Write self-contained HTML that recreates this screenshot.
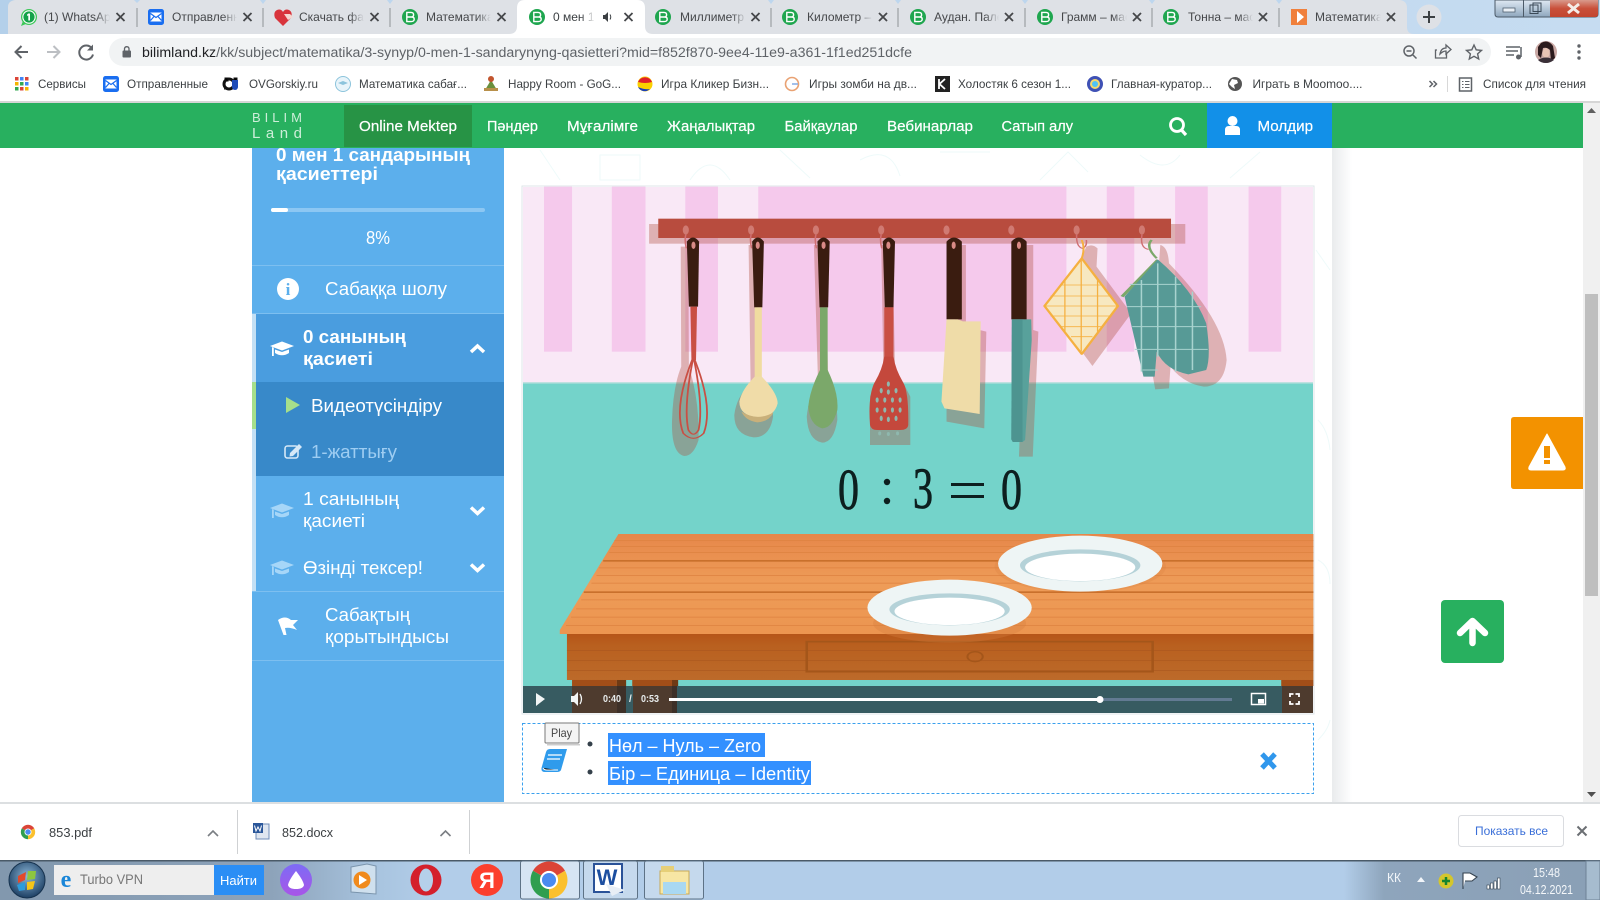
<!DOCTYPE html>
<html lang="kk"><head><meta charset="utf-8"><title>0 мен 1 сандарының қасиеттері</title>
<style>
html,body{margin:0;padding:0;background:#fff;width:1600px;height:900px;overflow:hidden}
svg{display:block}
text{font-family:"Liberation Sans","DejaVu Sans",sans-serif}
.t{font-size:12px;fill:#45474a}
.b{font-size:12px;fill:#3c4043}
.n{font-size:15px;fill:#fff;stroke:#fff;stroke-width:.2}
.s{font-size:18px;fill:#fff}
.sb{font-size:18px;fill:#fff;font-weight:700}
.x{stroke:#45474a;stroke-width:1.8;fill:none}
.sep{stroke:#8f9296;stroke-width:1}
.eq{font-family:"Liberation Serif",serif;font-size:58px;fill:#0d1f1f;stroke:#0d1f1f;stroke-width:.8}
</style></head><body>
<svg width="1600" height="900" viewBox="0 0 1600 900" xmlns="http://www.w3.org/2000/svg">
<defs>
<linearGradient id="fade"><stop offset="0" stop-color="#dee1e6" stop-opacity="0"/><stop offset="1" stop-color="#dee1e6"/></linearGradient>
<linearGradient id="fadew"><stop offset="0" stop-color="#fff" stop-opacity="0"/><stop offset="1" stop-color="#fff"/></linearGradient>
<linearGradient id="frame" x1="0" x2="1"><stop offset="0" stop-color="#b4d0ea"/><stop offset="1" stop-color="#c6dcf1"/></linearGradient>
<linearGradient id="task" x1="0" x2="1"><stop offset="0" stop-color="#8298ae"/><stop offset=".17" stop-color="#8da3ba"/><stop offset=".235" stop-color="#a8c4df"/><stop offset=".27" stop-color="#b2cde9"/><stop offset=".84" stop-color="#b2cde9"/><stop offset=".865" stop-color="#8ea5bc"/><stop offset="1" stop-color="#8a9fb5"/></linearGradient>
<linearGradient id="shade" x1="0" x2="1"><stop offset="0" stop-color="#e9ebed"/><stop offset="1" stop-color="#fff"/></linearGradient>
<linearGradient id="wood" x1="0" y1="0" x2="0" y2="1"><stop offset="0" stop-color="#e6874a"/><stop offset=".5" stop-color="#ee9c58"/><stop offset="1" stop-color="#ec9550"/></linearGradient>
<linearGradient id="front" x1="0" y1="0" x2="0" y2="1"><stop offset="0" stop-color="#b55418"/><stop offset=".25" stop-color="#b9601f"/><stop offset="1" stop-color="#bc6a2a"/></linearGradient>
<linearGradient id="closeb" x1="0" y1="0" x2="0" y2="1"><stop offset="0" stop-color="#d99a8c"/><stop offset=".5" stop-color="#c9503a"/><stop offset="1" stop-color="#c2452f"/></linearGradient>
<linearGradient id="winb" x1="0" y1="0" x2="0" y2="1"><stop offset="0" stop-color="#dfe9f3"/><stop offset="1" stop-color="#8ea6bd"/></linearGradient>
<radialGradient id="orb" cx=".5" cy=".4" r=".6"><stop offset="0" stop-color="#8bb7d8"/><stop offset="1" stop-color="#1d3f63"/></radialGradient>
<linearGradient id="alice" x1="0" y1="0" x2="0" y2="1"><stop offset="0" stop-color="#7d6cf5"/><stop offset="1" stop-color="#a855e8"/></linearGradient>
<g id="fav"><circle r="8" fill="#1fa64f"/><path d="M-3.200-4.600H1Q3.600-4.600 3.600-2.300 3.600-.3 1.800 0 4.200.1 4.200 2.200 4.200 4.600 1 4.600H-3.200ZM-3.200 0H1.800" fill="none" stroke="#fff" stroke-width="1.400"/></g>
<g id="tx"><path class="x" d="M-4-4L4 4M4-4L-4 4"/></g>
<g id="mail"><rect x="-8" y="-8" width="16" height="16" rx="2.500" fill="#1a6ef0"/><rect x="-5.500" y="-4.500" width="11" height="9" fill="#fff"/><path d="M-5.500-3.500L0 .5 5.500-3.500M-5.500 3.500L-2-.5M5.500 3.500L2-.5" stroke="#1a6ef0" stroke-width="1.200" fill="none"/></g>
<g id="chrome"><path d="M0 0L-8.660-5A10 10 0 0 1 8.660-5Z" fill="#db4437"/><path d="M0 0L8.660-5A10 10 0 0 1 0 10Z" fill="#fbc02d"/><path d="M0 0L0 10A10 10 0 0 1-8.660-5Z" fill="#2f9e4f"/><circle r="4.900" fill="#fff"/><circle r="3.800" fill="#4a8bf0"/></g>
<g id="cap"><path d="M0-6.500L12-2 0 2.500-12-2Z"/><path d="M-7 1.500V5Q0 9.500 7 5V1.500L0 4Z"/><path d="M-10-1V8h1.800V-.3Z"/></g>
</defs>

<!-- window frame + tab strip -->
<rect width="1600" height="34" fill="url(#frame)"/>
<path d="M8 34V7Q8 1 15 0H1400Q1407 1 1407 8V27Q1407 34 1414 34Z" fill="#dee1e6"/>
<path d="M134 0L137 3 140 0ZM260 0L263 4 266 0ZM387 0L390 4 393 0ZM768 0L771 4 774 0ZM895 0L898 4 901 0ZM1022 0L1025 4 1028 0ZM1149 0L1152 4 1155 0ZM1276 0L1279 4 1282 0Z" fill="#bdd6ee"/>
<text class="t" x="44" y="21">(1) WhatsApp</text>
<text class="t" x="172" y="21">Отправленные</text>
<text class="t" x="299" y="21">Скачать файл</text>
<text class="t" x="426" y="21">Математика</text>
<text class="t" x="680" y="21">Миллиметр</text>
<text class="t" x="807" y="21">Километр – м</text>
<text class="t" x="934" y="21">Аудан. Палет</text>
<text class="t" x="1061" y="21">Грамм – масс</text>
<text class="t" x="1188" y="21">Тонна – масс</text>
<text class="t" x="1315" y="21">Математика</text>
<g fill="url(#fade)"><rect x="96" y="6" width="14" height="22"/><rect x="223" y="6" width="14" height="22"/><rect x="350" y="6" width="14" height="22"/><rect x="477" y="6" width="14" height="22"/><rect x="732" y="6" width="14" height="22"/><rect x="859" y="6" width="14" height="22"/><rect x="985" y="6" width="14" height="22"/><rect x="1113" y="6" width="14" height="22"/><rect x="1239" y="6" width="14" height="22"/><rect x="1367" y="6" width="14" height="22"/></g>
<g fill="#dee1e6"><rect x="110" y="6" width="26" height="22"/><rect x="237" y="6" width="25" height="22"/><rect x="364" y="6" width="25" height="22"/><rect x="491" y="6" width="25" height="22"/><rect x="746" y="6" width="24" height="22"/><rect x="873" y="6" width="24" height="22"/><rect x="999" y="6" width="25" height="22"/><rect x="1127" y="6" width="24" height="22"/><rect x="1253" y="6" width="25" height="22"/><rect x="1381" y="6" width="24" height="22"/></g>
<path class="sep" d="M137 8V27M263 8V27M390 8V27M771 8V27M898 8V27M1025 8V27M1152 8V27M1279 8V27"/>
<use href="#tx" x="120.500" y="17"/><use href="#tx" x="247.500" y="17"/><use href="#tx" x="374.500" y="17"/><use href="#tx" x="501.500" y="17"/><use href="#tx" x="755.500" y="17"/><use href="#tx" x="883" y="17"/><use href="#tx" x="1009" y="17"/><use href="#tx" x="1137" y="17"/><use href="#tx" x="1263" y="17"/><use href="#tx" x="1391" y="17"/>
<!-- favicons -->
<path d="M23 21L21 26 26 24Z" fill="#3dc85a"/><circle cx="29" cy="17" r="8" fill="#3dc85a"/><circle cx="29" cy="17" r="6.700" fill="#fff"/><circle cx="29" cy="17" r="5.600" fill="#14a24a"/><path d="M28.300 13.500h1.700V20.500H28.300V15.400L27.100 16V14.500Z" fill="#fff"/>
<use href="#mail" x="156" y="17"/>
<path d="M283 26L275 18Q273 12 277 10 281 8.500 283 12 285 8.500 289 10 293 12 291 18Z" fill="#d8343c"/><path d="M284 14h6l3 3-5 3Z" fill="#f5d7d0"/>
<use href="#fav" x="410" y="17"/><use href="#fav" x="663" y="17"/><use href="#fav" x="790" y="17"/><use href="#fav" x="918" y="17"/><use href="#fav" x="1045" y="17"/><use href="#fav" x="1171" y="17"/>
<rect x="1291" y="9" width="16" height="16" fill="#f0803c"/><path d="M1297 11L1304 17 1297 23Z" fill="#fff"/>
<!-- active tab -->
<path d="M509 34Q517 34 517 26V8Q517 0 525 0H637Q645 0 645 8V26Q645 34 653 34Z" fill="#fff"/>
<use href="#fav" x="537" y="17"/>
<text class="t" x="553" y="21" style="fill:#3c4043">0 мен 1 сан</text>
<rect x="581" y="6" width="14" height="22" fill="url(#fadew)"/><rect x="595" y="6" width="40" height="22" fill="#fff"/>
<path d="M603 15h2l3-3v10l-3-3h-2Z" fill="#3c4043"/><path d="M610 14.500q1.500 2.500 0 5" stroke="#3c4043" fill="none"/>
<use href="#tx" x="628.500" y="17"/>
<!-- new tab -->
<circle cx="1429" cy="17" r="12.500" fill="#dee1e6"/><path d="M1429 11V23M1423 17H1435" stroke="#3c4043" stroke-width="2"/>
<!-- window controls -->
<path d="M1495 0H1598V14Q1598 17 1595 17H1498Q1495 17 1495 14Z" fill="url(#winb)" stroke="#4c5a68"/>
<rect x="1523" y="0" width="1" height="17" fill="#4c5a68"/><path d="M1550 0H1598V14Q1598 17 1595 17H1550Z" fill="url(#closeb)"/>
<rect x="1503" y="8" width="12" height="4" fill="#e9eff5" stroke="#4f5f70" stroke-width=".8"/>
<rect x="1530" y="5" width="8" height="8.500" fill="none" stroke="#3b4a58"/><rect x="1533" y="3" width="8" height="8.500" fill="none" stroke="#3b4a58"/>
<path d="M1568 4L1579 13M1579 4L1568 13" stroke="#f4ece8" stroke-width="3"/>

<!-- toolbar -->
<rect y="34" width="1600" height="34" fill="#fff"/>
<path d="M28 52H16M21.500 46L15.500 52 21.500 58" stroke="#5f6368" stroke-width="2" fill="none"/>
<path d="M47 52H59M53.500 46L59.500 52 53.500 58" stroke="#bcbfc3" stroke-width="2" fill="none"/>
<path d="M92 48.500A7 7 0 1 0 93 54.500" stroke="#5f6368" stroke-width="2" fill="none"/><path d="M93 44.500V50.500H87Z" fill="#5f6368"/>
<rect x="109" y="38" width="1382" height="28" rx="14" fill="#f1f3f4"/>
<rect x="122.500" y="50.500" width="8.500" height="7" rx="1" fill="#5f6368"/><path d="M124.500 50.500V48.500a2.300 2.300 0 0 1 4.500 0V50.500" stroke="#5f6368" stroke-width="1.300" fill="none"/>
<text x="142" y="57" font-size="13.500" fill="#5f6368" textLength="770" lengthAdjust="spacingAndGlyphs"><tspan fill="#202124">bilimland.kz</tspan>/kk/subject/matematika/3-synyp/0-men-1-sandarynyng-qasietteri?mid=f852f870-9ee4-11e9-a361-1f1ed251dcfe</text>
<circle cx="1409" cy="51" r="5" fill="none" stroke="#5f6368" stroke-width="1.500"/><path d="M1406.500 51h5M1413 55l3.500 3.500" stroke="#5f6368" stroke-width="1.500"/>
<path d="M1437 50h-1.500v8h11v-4M1440 54q1-6 6-6V45l5 4.500-5 4.500v-3q-3 0-6 3Z" stroke="#5f6368" stroke-width="1.300" fill="none"/>
<path d="M1474 45l2.200 4.800 5.300.6-3.900 3.500 1.100 5.100-4.700-2.700-4.700 2.700 1.100-5.100-3.900-3.500 5.300-.6Z" stroke="#5f6368" stroke-width="1.400" fill="none"/>
<path d="M1506 47H1520M1506 51H1518M1506 55H1514M1521 47V57" stroke="#5f6368" stroke-width="1.500"/><circle cx="1518.500" cy="57" r="2.500" fill="#5f6368"/>
<circle cx="1546" cy="52" r="11" fill="#c9a8a4"/><path d="M1541 43Q1548 39 1553 46L1555 58 1551 61 1550 50Q1547 47 1543 48L1541 58 1538 55 1538 47Z" fill="#2b1a1c"/><ellipse cx="1546" cy="53" rx="3.500" ry="5" fill="#e8c4b4"/><path d="M1538 60Q1546 55 1554 60 1550 63 1546 63 1541 63 1538 60Z" fill="#3a3038"/>
<circle cx="1579" cy="46" r="1.700" fill="#5f6368"/><circle cx="1579" cy="52" r="1.700" fill="#5f6368"/><circle cx="1579" cy="58" r="1.700" fill="#5f6368"/>

<!-- bookmarks -->
<rect y="68" width="1600" height="35" fill="#fff"/><rect y="101" width="1600" height="2" fill="#d6d6d6"/>
<rect x="15" y="77" width="3.500" height="3.500" fill="#db4437"/><rect x="20" y="77" width="3.500" height="3.500" fill="#4285f4"/><rect x="25" y="77" width="3.500" height="3.500" fill="#db4437"/><rect x="15" y="82" width="3.500" height="3.500" fill="#f4b400"/><rect x="20" y="82" width="3.500" height="3.500" fill="#34a853"/><rect x="25" y="82" width="3.500" height="3.500" fill="#4285f4"/><rect x="15" y="87" width="3.500" height="3.500" fill="#34a853"/><rect x="20" y="87" width="3.500" height="3.500" fill="#db4437"/><rect x="25" y="87" width="3.500" height="3.500" fill="#f4b400"/>
<text class="b" x="38" y="88" textLength="48" lengthAdjust="spacingAndGlyphs">Сервисы</text>
<use href="#mail" x="111" y="84"/>
<text class="b" x="127" y="88" textLength="81" lengthAdjust="spacingAndGlyphs">Отправленные</text>
<circle cx="229" cy="84" r="5" fill="none" stroke="#111" stroke-width="3"/><path d="M225 78h3v3h-3ZM234 78h3v3h-3ZM224 89h4M233 89h4" stroke="#111"/><path d="M232 80h6v7a3 3 0 0 1-6 0Z" fill="#1e4bb8"/>
<text class="b" x="249" y="88" textLength="69" lengthAdjust="spacingAndGlyphs">OVGorskiy.ru</text>
<circle cx="343" cy="84" r="7.500" fill="#e8f4fa" stroke="#8cc4dc"/><path d="M338 83l5-2 5 2-5 2Z" fill="#8cc4dc"/>
<text class="b" x="359" y="88" textLength="108" lengthAdjust="spacingAndGlyphs">Математика сабағ...</text>
<path d="M485 90l6-10 6 10Z" fill="#6a8f3c"/><circle cx="491" cy="79" r="3" fill="#c2552e"/><rect x="484" y="88" width="14" height="3" fill="#b8904a"/>
<text class="b" x="508" y="88" textLength="113" lengthAdjust="spacingAndGlyphs">Happy Room - GoG...</text>
<circle cx="645" cy="84" r="7.500" fill="#fbd000"/><path d="M638 82A7.500 7.500 0 0 1 652 82Q645 84 638 82Z" fill="#e0202a"/><path d="M638 87A7.500 7.500 0 0 0 650 89Q645 90 638 87Z" fill="#1a3fb8"/>
<text class="b" x="661" y="88" textLength="108" lengthAdjust="spacingAndGlyphs">Игра Кликер Бизн...</text>
<circle cx="792" cy="84" r="6.500" fill="none" stroke="#e9a273" stroke-width="1.600"/><path d="M792 84h6" stroke="#8ab0e6" stroke-width="1.600"/>
<text class="b" x="809" y="88" textLength="108" lengthAdjust="spacingAndGlyphs">Игры зомби на дв...</text>
<rect x="935" y="76" width="15" height="16" fill="#222"/><path d="M939 79V89M945 79L939.500 84 945 89" stroke="#fff" stroke-width="1.800" fill="none"/>
<text class="b" x="958" y="88" textLength="113" lengthAdjust="spacingAndGlyphs">Холостяк 6 сезон 1...</text>
<circle cx="1095" cy="84" r="8" fill="#3f51b5"/><circle cx="1095" cy="84" r="5" fill="#f5d76e"/><circle cx="1095" cy="84" r="3" fill="#4fc3f7"/>
<text class="b" x="1111" y="88" textLength="101" lengthAdjust="spacingAndGlyphs">Главная-куратор...</text>
<circle cx="1235" cy="84" r="7" fill="#555"/><path d="M1232 79l5 1 1 3-4 2 1 4-3-2-3-3Z" fill="#fff"/>
<text class="b" x="1252.500" y="88" textLength="110" lengthAdjust="spacingAndGlyphs">Играть в Moomoo....</text>
<path d="M1429.500 81l3 3-3 3M1433.500 81l3 3-3 3" stroke="#5f6368" stroke-width="1.500" fill="none"/>
<rect x="1447" y="76" width="1" height="16" fill="#d8d8d8"/>
<rect x="1459.500" y="78" width="12" height="13" fill="none" stroke="#5f6368" stroke-width="1.500"/><path d="M1462 81.500h1.500M1462 84.500h1.500M1462 87.500h1.500M1465 81.500h4.500M1465 84.500h4.500M1465 87.500h4.500" stroke="#5f6368"/>
<text class="b" x="1483" y="88" textLength="103" lengthAdjust="spacingAndGlyphs">Список для чтения</text>

<!-- page -->
<rect y="103" width="1600" height="700" fill="#fff"/>
<rect x="1332" y="148" width="20" height="655" fill="url(#shade)"/>
<!-- faint background doodles -->
<g fill="none" stroke="#eefafa" stroke-width="1">
 <path d="M540 150L560 180M600 155h40v25h-40ZM690 180q20-30 40 0M780 150l30 28M860 160q30-16 40 16M940 152h50M1040 180l28-28 20 20M1140 155q25 20 40 0M1230 178l30-26M1316 250l14 20M1318 420q10 10 12 30M1318 560q12 6 12 24M1318 740q10-10 12-20"/>
 <path d="M640 790q30-40 60-10M740 792l30-40 40 30M860 780q10-30 40-25M960 790q30-20 30-50M1080 790q-10-30 20-40M1180 785l40-40M1300 790q-10-30 10-40"/>
</g>
<!-- sidebar -->
<rect x="252" y="148" width="252" height="655" fill="#5cafec"/>
<text class="sb" x="276" y="161" textLength="194" lengthAdjust="spacingAndGlyphs">0 мен 1 сандарының</text>
<text class="sb" x="276" y="180" textLength="102" lengthAdjust="spacingAndGlyphs">қасиеттері</text>
<rect x="271" y="208" width="214" height="4" rx="2" fill="#8cc7f3"/><rect x="271" y="208" width="17" height="4" rx="2" fill="#fff"/>
<text class="s" x="366" y="244" textLength="24" lengthAdjust="spacingAndGlyphs" font-size="17">8%</text>
<rect x="252" y="265" width="252" height="1" fill="#7dbff0"/>
<circle cx="288" cy="289" r="11" fill="#fff"/><text x="288" y="295" text-anchor="middle" font-size="17" font-weight="700" fill="#5cafec" style="font-family:'Liberation Serif',serif">i</text>
<text class="s" x="325" y="295" textLength="122" lengthAdjust="spacingAndGlyphs">Сабаққа шолу</text>
<rect x="252" y="313" width="252" height="1" fill="#7dbff0"/>
<rect x="252" y="314" width="252" height="68" fill="#4a9ddf"/>
<rect x="252" y="314" width="4" height="277" fill="#c3e0f5"/>
<rect x="256" y="382" width="248" height="94" fill="#3889c9"/>
<rect x="252" y="382" width="4" height="47" fill="#a6df8b"/>
<use href="#cap" x="282" y="348" fill="#fff"/>
<text class="sb" x="303" y="343" textLength="103" lengthAdjust="spacingAndGlyphs">0 санының</text>
<text class="sb" x="303" y="365" textLength="70" lengthAdjust="spacingAndGlyphs">қасиеті</text>
<path d="M471 352L477.500 346 484 352" stroke="#fff" stroke-width="3.500" fill="none"/>
<polygon points="286,397 300,405 286,413" fill="#a6df8b"/>
<text class="s" x="311" y="412" textLength="131" lengthAdjust="spacingAndGlyphs">Видеотүсіндіру</text>
<rect x="285" y="446" width="13" height="12" rx="2.500" fill="none" stroke="#d5e8f7" stroke-width="1.600"/><path d="M290 453L299 444 302 447 293 456 289.500 456.500Z" fill="#d5e8f7"/>
<text class="s" x="311" y="458" textLength="86" lengthAdjust="spacingAndGlyphs" style="fill:#9ecdf2">1-жаттығу</text>
<use href="#cap" x="282" y="510" fill="#a6d6f8"/>
<text class="s" x="303" y="505" textLength="96" lengthAdjust="spacingAndGlyphs">1 санының</text>
<text class="s" x="303" y="527" textLength="62" lengthAdjust="spacingAndGlyphs">қасиеті</text>
<path d="M471 507.500L477.500 513.500 484 507.500" stroke="#fff" stroke-width="3.500" fill="none"/>
<use href="#cap" x="282" y="567" fill="#a6d6f8"/>
<text class="s" x="303" y="574" textLength="120" lengthAdjust="spacingAndGlyphs">Өзінді тексер!</text>
<path d="M471 564.500L477.500 570.500 484 564.500" stroke="#fff" stroke-width="3.500" fill="none"/>
<rect x="252" y="591" width="252" height="1" fill="#7dbff0"/>
<path d="M278 620Q285 615 291 620L298 620 293 625 297 630Q290 627 285 628L286.500 635 283.500 635Z" fill="#fff"/>
<text class="s" x="325" y="621" textLength="85" lengthAdjust="spacingAndGlyphs">Сабақтың</text>
<text class="s" x="325" y="643" textLength="124" lengthAdjust="spacingAndGlyphs">қорытындысы</text>
<rect x="252" y="660" width="252" height="1" fill="#7dbff0"/>

<!-- video -->
<rect x="522" y="186" width="792" height="528" fill="none" stroke="#dfe6ea"/>
<rect x="523" y="187" width="790" height="196" fill="#f9e8f6"/>
<rect x="523" y="383" width="790" height="303" fill="#74d3ca"/>
<rect x="523" y="382" width="790" height="1.500" fill="#bfe0e0"/>
<g transform="translate(520,180) scale(.5102,.33333)">
 <g fill="#f5c9ec"><rect x="47" y="20" width="55" height="495"/><rect x="180" y="20" width="66" height="495"/><rect x="324" y="20" width="64" height="495"/><rect x="467" y="20" width="604" height="495"/><rect x="1150" y="20" width="54" height="495"/><rect x="1284" y="20" width="64" height="495"/><rect x="1428" y="20" width="64" height="495"/></g>
 <g fill="#b05040" opacity=".36">
  <rect x="253" y="132" width="1051" height="59"/>
  <path d="M315 200L330 200 331 560Q352 660 350 780 340 828 322 828 296 820 298 720 300 620 316 560Z"/>
  <path d="M448 195H463L467 610Q496 660 496 710 490 772 458 772 420 765 420 705 424 650 452 610Z"/>
  <path d="M576 195H598L604 600Q622 660 622 720 615 788 592 788 564 780 562 710 566 650 584 600Z"/>
  <path d="M708 195H730L735 560 765 650V795H686V650L712 560Z"/>
  <path d="M866 195H874V440L914 455 910 745 836 725V690Z"/>
  <path d="M993 195H1006V450L1016 455 1005 830H978Z"/>
  <path d="M1110 200Q1122 190 1132 205L1130 260 1198 400 1122 558 1050 410Z"/>
  <path d="M1255 195Q1270 200 1272 250 1380 420 1385 540 1380 620 1340 620 1300 610 1275 560L1272 625 1245 628 1230 500 1250 300Z"/>
 </g>
 <rect x="271" y="116" width="1005" height="58" fill="#b84c3e"/>
 <g fill="#d07a72"><ellipse cx="325" cy="150" rx="6" ry="14"/><ellipse cx="453" cy="150" rx="6" ry="14"/><ellipse cx="580" cy="150" rx="6" ry="14"/><ellipse cx="708" cy="150" rx="6" ry="14"/><ellipse cx="836" cy="150" rx="6" ry="14"/><ellipse cx="963" cy="150" rx="6" ry="14"/><ellipse cx="1091" cy="150" rx="6" ry="14"/><ellipse cx="1219" cy="150" rx="6" ry="14"/></g>
 <path d="M325 164Q322 180 326 205M453 164Q450 180 454 205M580 164Q577 180 581 205M708 164Q705 180 709 205M1091 164Q1090 200 1102 205 1112 200 1110 180M1219 164Q1215 205 1232 208" fill="none" stroke="#cf6f72" stroke-width="3"/>
 <g fill="#3a1c10">
  <path d="M327 185Q339 160 351 185L349 380H331Z"/>
  <path d="M455 185Q466 160 478 185L475 382H459Z"/>
  <path d="M583 185Q595 160 607 185L604 382H587Z"/>
  <path d="M711 185Q723 160 735 185L732 382H715Z"/>
  <path d="M836 185Q850 160 866 185V418H836Z"/>
  <path d="M963 185Q978 160 993 185V418H963Z"/>
 </g>
 <g fill="#d88a86"><ellipse cx="340" cy="196" rx="4" ry="11"/><ellipse cx="466" cy="196" rx="4" ry="11"/><ellipse cx="595" cy="196" rx="4" ry="11"/><ellipse cx="722" cy="196" rx="4" ry="11"/><ellipse cx="850" cy="196" rx="4" ry="11"/><ellipse cx="978" cy="196" rx="4" ry="11"/></g>
 <!-- whisk -->
 <path d="M334 380H347L345 540H336Z" fill="#c94f44"/>
 <g fill="none" stroke="#c94f44" stroke-width="3.500"><path d="M340 530Q300 680 320 760 340 790 360 760 380 680 340 530Z"/><path d="M340 530Q320 680 330 750 340 775 350 750 360 680 340 530Z"/></g>
 <!-- spoon -->
 <rect x="460" y="382" width="14" height="220" fill="#f0dca0"/>
 <path d="M460 590H474Q505 640 505 670 498 712 467 712 430 708 430 665 434 630 460 590Z" fill="#f0dca8"/>
 <path d="M434 695Q465 725 497 697 488 725 465 727 442 722 434 695Z" fill="#c9b07a"/>
 <!-- ladle -->
 <rect x="588" y="382" width="15" height="200" fill="#7ba86a"/>
 <path d="M588 570H603Q625 640 622 690 612 745 592 745 568 735 565 680 568 630 588 570Z" fill="#7ba86a"/>
 <!-- slotted spatula -->
 <rect x="714" y="382" width="18" height="170" fill="#c94f44"/>
 <path d="M714 530H732Q736 570 752 610 762 640 761 735 760 750 745 750H700Q688 750 686 735 682 650 694 610 710 570 714 530Z" fill="#c4483c"/>
 <g fill="#8fb8ae"><ellipse cx="722" cy="612" rx="3" ry="8"/><ellipse cx="708" cy="632" rx="3" ry="8"/><ellipse cx="722" cy="636" rx="3" ry="8"/><ellipse cx="737" cy="632" rx="3" ry="8"/><ellipse cx="700" cy="660" rx="3" ry="8"/><ellipse cx="715" cy="660" rx="3" ry="8"/><ellipse cx="730" cy="660" rx="3" ry="8"/><ellipse cx="745" cy="660" rx="3" ry="8"/><ellipse cx="700" cy="690" rx="3" ry="8"/><ellipse cx="715" cy="690" rx="3" ry="8"/><ellipse cx="730" cy="690" rx="3" ry="8"/><ellipse cx="745" cy="690" rx="3" ry="8"/><ellipse cx="708" cy="715" rx="3" ry="8"/><ellipse cx="722" cy="718" rx="3" ry="8"/><ellipse cx="737" cy="715" rx="3" ry="8"/><ellipse cx="705" cy="760" rx="3" ry="6"/><ellipse cx="722" cy="762" rx="3" ry="6"/><ellipse cx="740" cy="760" rx="3" ry="6"/></g>
 <!-- cleaver -->
 <path d="M836 418L858 418 868 424 903 424 901 702 832 685 826 665Z" fill="#efdca8"/>
 <!-- knife -->
 <path d="M964 418H1002L1003 480 990 780 985 786H966L963 778Z" fill="#58a19b"/>
 <path d="M964 418H985L985 786H966L963 778Z" fill="#4d9490"/>
 <!-- pot holder -->
 <path d="M1101 180Q1108 205 1101 235" fill="none" stroke="#f5b040" stroke-width="4"/>
 <path d="M1101 235L1172 378 1101 522 1028 378Z" fill="#f7e8c0" stroke="#f5b040" stroke-width="5" stroke-linejoin="round"/>
 <g stroke="#f5b040" stroke-width="2.500"><path d="M1068 300V455M1100 240V515M1132 300V455M1062 315H1140M1040 348H1160M1030 378H1170M1040 408H1160M1060 440H1142M1080 470H1122"/></g>
 <!-- mitt -->
 <path d="M1180 350L1250 240" stroke="#7ba86a" stroke-width="7"/>
 <path d="M1238 180Q1225 200 1248 235" fill="none" stroke="#7ba86a" stroke-width="5"/>
 <path d="M1250 238Q1320 330 1345 430 1355 530 1345 570L1310 583Q1265 570 1248 515L1244 590H1222Q1205 480 1185 350Z" fill="#579a96"/>
 <g stroke="#a8d3cf" stroke-width="3"><path d="M1218 300V575M1250 250V530M1285 290V575M1318 335V570M1195 313H1295M1190 380H1335M1200 440H1345M1205 508H1348M1220 570H1250"/></g>
</g>
<g transform="translate(520,460) scale(.5102,.33333)">
 <path d="M193 222H1555V522H78V510Z" fill="url(#wood)"/>
 <g fill="#c9702c"><rect x="163" y="300" width="1392" height="5"/><rect x="125" y="394" width="1430" height="5"/></g>
 <g fill="#de8240" opacity=".75"><rect x="185" y="240" width="1370" height="3"/><rect x="180" y="258" width="1375" height="3"/><rect x="175" y="276" width="1380" height="3"/><rect x="155" y="322" width="1400" height="3"/><rect x="150" y="345" width="1405" height="3"/><rect x="140" y="368" width="1415" height="3"/><rect x="120" y="418" width="1435" height="3"/><rect x="110" y="445" width="1445" height="3"/><rect x="100" y="470" width="1455" height="3"/><rect x="90" y="495" width="1465" height="3"/></g>
 <rect x="92" y="522" width="1463" height="138" fill="url(#front)"/>
 <g fill="#a8561e" opacity=".55"><rect x="92" y="570" width="1463" height="3"/><rect x="92" y="600" width="1463" height="3"/><rect x="92" y="630" width="1463" height="3"/></g>
 <rect x="562" y="545" width="678" height="90" fill="none" stroke="#a4561a" stroke-width="5"/>
 <circle cx="892" cy="590" r="15" fill="none" stroke="#a4561a" stroke-width="4"/>
 <g fill="#a24e18"><rect x="102" y="660" width="88" height="18"/><rect x="220" y="660" width="80" height="18"/><rect x="1492" y="660" width="63" height="18"/></g>
 <g fill="#6e3a14"><rect x="190" y="660" width="18" height="18"/><rect x="298" y="660" width="12" height="18"/></g>
 <ellipse cx="842" cy="490" rx="150" ry="58" fill="#d67f3e" opacity=".35"/>
 <ellipse cx="1098" cy="320" rx="168" ry="78" fill="#d67f3e" opacity=".25"/>
 <ellipse cx="1098" cy="311" rx="161" ry="84" fill="#eef5f5"/><ellipse cx="1098" cy="316" rx="118" ry="48" fill="#b5d2d8"/><ellipse cx="1098" cy="322" rx="108" ry="41" fill="#fff"/>
 <ellipse cx="842" cy="443" rx="161" ry="84" fill="#eef5f5"/><ellipse cx="842" cy="448" rx="118" ry="48" fill="#b5d2d8"/><ellipse cx="842" cy="454" rx="108" ry="41" fill="#fff"/>
</g>
<g>
 <text class="eq" x="838" y="509" textLength="21" lengthAdjust="spacingAndGlyphs">0</text>
 <circle cx="887" cy="482" r="3.200" fill="#0d1f1f"/><circle cx="887" cy="501" r="3.200" fill="#0d1f1f"/>
 <text class="eq" x="913" y="508" textLength="20" lengthAdjust="spacingAndGlyphs">3</text>
 <rect x="951" y="483" width="33" height="3" fill="#0d1f1f"/><rect x="951" y="495" width="33" height="3" fill="#0d1f1f"/>
 <text class="eq" x="1001" y="509" textLength="21" lengthAdjust="spacingAndGlyphs">0</text>
</g>
<!-- video controls -->
<rect x="523" y="686" width="790" height="27" fill="#375b61"/>
<g fill="#4e3b2e"><rect x="572" y="686" width="45" height="27"/><rect x="633" y="686" width="39" height="27"/><rect x="1282" y="686" width="31" height="27"/></g>
<g fill="#3d3028"><rect x="617" y="686" width="9" height="27"/><rect x="672" y="686" width="5" height="27"/></g>
<polygon points="536,693 545,699 536,706" fill="#f2f5f5"/>
<path d="M571 696h3l4-4v14l-4-4h-3Z" fill="#f2f5f5"/><path d="M580 694q3 5 0 10" stroke="#f2f5f5" stroke-width="1.300" fill="none"/>
<text x="603" y="702" font-size="10" font-weight="700" fill="#e8ecec" textLength="18" lengthAdjust="spacingAndGlyphs">0:40</text>
<text x="629" y="702" font-size="10" font-weight="700" fill="#e8ecec">/</text>
<text x="641" y="702" font-size="10" font-weight="700" fill="#e8ecec" textLength="18" lengthAdjust="spacingAndGlyphs">0:53</text>
<rect x="669" y="698" width="563" height="3" fill="#627a92"/><rect x="669" y="698" width="431" height="3" fill="#fff"/><circle cx="1100" cy="699.500" r="3.500" fill="#fff"/>
<rect x="1251.500" y="693.500" width="14" height="11" fill="none" stroke="#fff" stroke-width="1.500"/><rect x="1258" y="699" width="6" height="4.500" fill="#fff"/>
<path d="M1290 697V694H1293.500M1295.500 694H1299V697M1299 701V704H1295.500M1293.500 704H1290V701" stroke="#fff" stroke-width="1.800" fill="none"/>

<!-- glossary box -->
<rect x="522.500" y="723.500" width="791" height="70" fill="#fff" stroke="#3aa0ee" stroke-dasharray="3 2"/>
<rect x="608" y="733" width="157" height="24" fill="#3390ff"/><rect x="608" y="761" width="203" height="24" fill="#3390ff"/>
<circle cx="590" cy="744" r="2.500" fill="#34404a"/><circle cx="590" cy="772" r="2.500" fill="#34404a"/>
<text x="609" y="752" font-size="18.500" fill="#fff" textLength="152" lengthAdjust="spacingAndGlyphs">Нөл – Нуль – Zero</text>
<text x="609" y="780" font-size="18.500" fill="#fff" textLength="201" lengthAdjust="spacingAndGlyphs">Бір – Единица – Identity</text>
<path d="M546 752Q547 749 550 749H567L561 770Q560 772 557 772H545Q541 772 541.500 768Z" fill="#2f9bec"/>
<path d="M548 755H562M547 759H560" stroke="#fff" stroke-width="1.300"/><path d="M543 768Q544 770 547 770H558" stroke="#fff"/>
<path d="M1262 754L1275 768M1275 754L1262 768" stroke="#3097ec" stroke-width="5"/>
<rect x="545" y="723" width="34" height="20" rx="1" fill="#f4f4f4" stroke="#7a7a7a"/><rect x="547" y="744" width="33" height="1.500" fill="#ccc"/>
<text x="551" y="737" font-size="12" fill="#444" textLength="21" lengthAdjust="spacingAndGlyphs">Play</text>

<!-- nav -->
<rect y="103" width="1583" height="45" fill="#28b05f"/>
<rect x="344" y="105" width="128" height="42" fill="#279345"/>
<rect x="1207" y="103" width="125" height="45" fill="#1290e8"/>
<text x="252" y="122" font-size="13" fill="#cdeed9" textLength="50" lengthAdjust="spacing">BILIM</text>
<text x="252" y="138" font-size="15" fill="#cdeed9" textLength="50" lengthAdjust="spacing">Land</text>
<text class="n" x="359" y="131" textLength="98" lengthAdjust="spacingAndGlyphs">Online Mektep</text>
<text class="n" x="487" y="131" textLength="51" lengthAdjust="spacingAndGlyphs">Пәндер</text>
<text class="n" x="567" y="131" textLength="71" lengthAdjust="spacingAndGlyphs">Мұғалімге</text>
<text class="n" x="667" y="131" textLength="88" lengthAdjust="spacingAndGlyphs">Жаңалықтар</text>
<text class="n" x="784.500" y="131" textLength="73" lengthAdjust="spacingAndGlyphs">Байқаулар</text>
<text class="n" x="887" y="131" textLength="86" lengthAdjust="spacingAndGlyphs">Вебинарлар</text>
<text class="n" x="1001.500" y="131" textLength="71.500" lengthAdjust="spacingAndGlyphs">Сатып алу</text>
<circle cx="1177" cy="125" r="6.500" fill="none" stroke="#fff" stroke-width="2.800"/><path d="M1181.500 130L1186 135" stroke="#fff" stroke-width="3.200"/>
<circle cx="1232.500" cy="121" r="5" fill="#fff"/><path d="M1225 135V130Q1225 126 1229 126H1236Q1240 126 1240 130V135Z" fill="#fff"/>
<text class="n" x="1257.500" y="131" textLength="55.500" lengthAdjust="spacingAndGlyphs">Молдир</text>

<!-- scrollbar -->
<rect x="1583" y="103" width="17" height="700" fill="#f0f0f0"/>
<rect x="1585" y="294" width="13" height="302" fill="#bfbfbf"/>
<polygon points="1591.500,108 1596,113 1587,113" fill="#606060"/><polygon points="1587,792 1596,792 1591.500,797" fill="#505050"/>
<!-- floating -->
<path d="M1514 417H1583V489H1514Q1511 489 1511 486V420Q1511 417 1514 417Z" fill="#f39200"/>
<path d="M1547 434L1565 467Q1566 470 1563 470H1531Q1528 470 1529 467Z" fill="#fff" stroke="#fff" stroke-linejoin="round"/>
<rect x="1544" y="446" width="6" height="12" fill="#f39200"/><rect x="1544" y="460" width="6" height="4" fill="#f39200"/>
<rect x="1441" y="600" width="63" height="63" rx="4" fill="#28b05f"/>
<path d="M1460 633L1472.500 621 1485 633M1472.500 623V643" stroke="#fff" stroke-width="6.500" fill="none" stroke-linecap="round" stroke-linejoin="round"/>

<!-- downloads -->
<rect y="803" width="1600" height="57" fill="#fff"/><rect y="802" width="1600" height="2" fill="#dcdfe1"/>
<use href="#chrome" transform="translate(28,832) scale(.72)"/>
<text x="49" y="837" font-size="13" fill="#3c4043" textLength="43" lengthAdjust="spacingAndGlyphs">853.pdf</text>
<path d="M208 836L213 831 218 836" stroke="#7a7e83" stroke-width="1.600" fill="none"/>
<rect x="237" y="810" width="1" height="44" fill="#cfd1d3"/>
<rect x="256" y="824" width="13" height="15" fill="#dfe6f0" stroke="#6f8cb8"/><rect x="253" y="823" width="10" height="10" fill="#2b579a"/><path d="M254.500 825.500L256 831 258 827 260 831 261.500 825.500" stroke="#fff" fill="none"/>
<text x="282" y="837" font-size="13" fill="#3c4043" textLength="51" lengthAdjust="spacingAndGlyphs">852.docx</text>
<path d="M440.500 836L445.500 831 450.500 836" stroke="#7a7e83" stroke-width="1.600" fill="none"/>
<rect x="469" y="810" width="1" height="44" fill="#cfd1d3"/>
<rect x="1458.500" y="815.500" width="105" height="31" rx="3" fill="#fff" stroke="#dadce0"/>
<text x="1475" y="835" font-size="12" fill="#3a6fd8" textLength="73" lengthAdjust="spacingAndGlyphs">Показать все</text>
<path d="M1577.500 826.500L1586.500 835.500M1586.500 826.500L1577.500 835.500" stroke="#6b6f73" stroke-width="2"/>

<!-- taskbar -->
<rect y="860" width="1600" height="40" fill="url(#task)"/><rect y="860" width="1600" height="1.500" fill="#4a5a68"/>
<circle cx="27" cy="880" r="18" fill="url(#orb)" stroke="#16324e"/>
<path d="M18 876L26 872 25 880 18 883Z" fill="#e2492a"/><path d="M28 871L36 871 35 879 27 880Z" fill="#8dc63f"/><path d="M17 885L25 882 25 890 19 891Z" fill="#2d9cdb"/><path d="M27 882L35 881 33 889 27 890Z" fill="#f5c518"/>
<rect x="54" y="865" width="160" height="30" fill="#eeeeee"/>
<rect x="214" y="865" width="50" height="30" fill="#2a8ef5"/>
<text x="66" y="887" font-size="24" font-weight="700" fill="#1a86d8" text-anchor="middle" style="font-family:'Liberation Serif',serif">e</text>
<text x="80" y="884" font-size="13.500" fill="#777" textLength="63" lengthAdjust="spacingAndGlyphs">Turbo VPN</text>
<text x="220" y="885" font-size="13" fill="#fff" textLength="37" lengthAdjust="spacingAndGlyphs">Найти</text>
<circle cx="296" cy="880" r="16" fill="url(#alice)"/><path d="M296 871Q303 880 304 885 303 889 296 889 289 889 288 885 289 880 296 871Z" fill="#fff"/>
<path d="M351 867L367 864 376 866V894L351 892Z" fill="#cfe0ee" stroke="#7b95ad"/><circle cx="362" cy="880" r="8.500" fill="#f08a1c"/><polygon points="359,875 367,880 359,885" fill="#fff"/>
<circle cx="426" cy="880" r="15.500" fill="#d4202c"/><ellipse cx="426" cy="880" rx="7" ry="11.500" fill="#b5d0ea"/>
<circle cx="487" cy="880" r="16" fill="#fc3f2d"/><text x="487" y="888" font-size="22" font-weight="700" fill="#fff" text-anchor="middle">Я</text>
<rect x="520.500" y="861" width="59" height="38" rx="2" fill="#d5e4f3" stroke="#5d7286"/>
<use href="#chrome" transform="translate(549,880) scale(1.850)"/>
<rect x="583.500" y="861" width="54" height="38" rx="2" fill="#c5d9ed" stroke="#5d7286"/>
<rect x="594" y="864" width="28" height="28" fill="#fff" stroke="#2a5298" stroke-width="2"/><path d="M606 884L625 890 612 896Z" fill="#e8eef5"/><text x="607" y="885" font-size="22" font-weight="700" fill="#1d4fa0" text-anchor="middle">W</text>
<rect x="644.500" y="861" width="59" height="38" rx="2" fill="#c5d9ed" stroke="#5d7286"/>
<path d="M660 871H689V894H660Z" fill="#f7e6a4" stroke="#c8a956"/><rect x="661" y="866" width="13" height="6" fill="#e6cf78"/><rect x="663" y="882" width="23" height="12" fill="#a9d8f2"/>
<text x="1387" y="882" font-size="12.500" fill="#f2f6fa" textLength="14" lengthAdjust="spacingAndGlyphs">КК</text>
<polygon points="1421,877 1425,882 1417,882" fill="#f2f6fa"/>
<circle cx="1446" cy="881" r="7.500" fill="#d4c62c"/><path d="M1446 877V885M1442 881H1450" stroke="#15842e" stroke-width="2.500"/>
<path d="M1463 889V873H1470L1477 877 1472 881H1465" fill="#fff" stroke="#33414e" stroke-width="1.100"/>
<g fill="#fff" stroke="#33414e" stroke-width=".6"><rect x="1487" y="885" width="2.500" height="4"/><rect x="1490.500" y="883" width="2.500" height="6"/><rect x="1494" y="881" width="2.500" height="8"/><rect x="1497.500" y="878" width="2.500" height="11"/></g>
<text x="1533" y="877" font-size="12.500" fill="#f4f7fa" textLength="27" lengthAdjust="spacingAndGlyphs">15:48</text>
<text x="1520" y="894" font-size="12.500" fill="#f4f7fa" textLength="53" lengthAdjust="spacingAndGlyphs">04.12.2021</text>
<rect x="1586" y="861" width="14" height="39" fill="#a6bccf" stroke="#6d8296"/>
</svg>
</body></html>
